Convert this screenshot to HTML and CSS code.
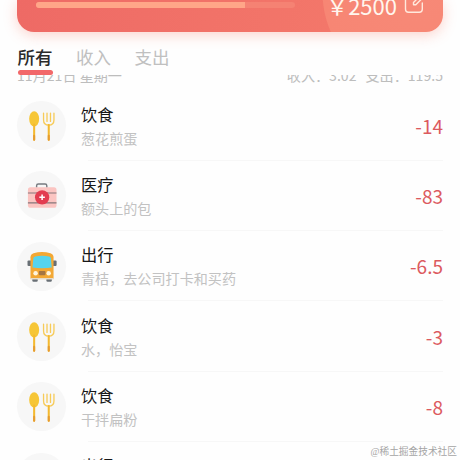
FILE: index.html
```html
<!DOCTYPE html>
<html lang="zh-CN">
<head>
<meta charset="utf-8">
<title>账单</title>
<link rel="stylesheet" href="styles.css">
</head>
<body>
<svg class="defs" aria-hidden="true">
  <symbol id="food" viewBox="0 0 48 48">
    <ellipse cx="16.8" cy="17.5" rx="4.9" ry="7.4" fill="#f6c636"/>
    <path d="M16.8 23v15" stroke="#f4b92f" stroke-width="2" stroke-linecap="round"/>
    <path d="M26 12v6.500c0 3 2 5 5.100 5s5.100-2 5.100-5v-6.500M29.400 12v8M32.800 12v8" fill="none" stroke="#f7cb58" stroke-width="1.300" stroke-linecap="round"/>
    <path d="M31.100 23.500v14.500" stroke="#f4b92f" stroke-width="2" stroke-linecap="round"/>
    <path d="M16.800 34v4M31.100 34v4" stroke="#e69b2f" stroke-width="2" stroke-linecap="round"/>
  </symbol>
  <symbol id="medical" viewBox="0 0 48 48">
    <path d="M19.200 16.500v-2q0-1.700 1.700-1.700h6.600q1.700 0 1.700 1.700v2" fill="none" stroke="#777b80" stroke-width="1.400"/>
    <rect x="10.700" y="16" width="28" height="20" rx="2.500" fill="#fbc5c2"/>
    <path d="M10.700 21.600h28M10.700 31.200h28" stroke="#87777b" stroke-width="1.100"/>
    <circle cx="24.600" cy="25.800" r="7" fill="#e33c50"/>
    <path d="M24.600 23.100v5.400M21.900 25.800h5.400" stroke="#fff" stroke-width="1.500"/>
  </symbol>
  <symbol id="bus" viewBox="0 0 48 48">
    <rect x="10.300" y="18" width="4" height="5.500" rx="1" fill="#686f75"/>
    <rect x="34.800" y="18" width="4" height="5.500" rx="1" fill="#686f75"/>
    <rect x="15" y="34" width="5.300" height="5" rx="1.200" fill="#686f75"/>
    <rect x="28.800" y="34" width="5.300" height="5" rx="1.200" fill="#686f75"/>
    <path d="M13.200 36V15q0-3 3-4 8.300-2.400 16.600 0 3 1 3 4v21z" fill="#f3a834"/>
    <path d="M16 16q0-1.600 1.700-1.900 6.900-1.200 13.800 0 1.700.3 1.700 1.900l.8 9q-9.400 1.500-18.800 0z" fill="#56d4ee"/>
    <circle cx="18.200" cy="30.500" r="2.200" fill="#fff5dd"/>
    <circle cx="31" cy="30.500" r="2.200" fill="#fff5dd"/>
    <rect x="21.400" y="28.500" width="6.500" height="4" rx=".8" fill="#a47542"/>
    <path d="M13.200 36h22.600" stroke="#e8dcc8" stroke-width="1.400"/>
  </symbol>
</svg>
<main class="screen">
  <section class="budget">
    <div class="progress"><div class="progress-fill"></div></div>
    <div class="budget-total"><span>￥</span><span>2500</span>
      <svg class="edit" viewBox="0 0 20 20"><path d="M10.500 1.500H4.500Q1.500 1.500 1.500 4.500v10.800q0 3 3 3h10.800q3 0 3-3V9M9.500 8.500v2.300h2.300L19 3.500M9.500 8.500 16.500 1.500" fill="none" stroke="#ffe9dd" stroke-width="1.400" stroke-linecap="round" stroke-linejoin="round"/></svg>
    </div>
  </section>
  <nav class="tabs">
    <span class="tab active">所有</span><span class="tab">收入</span><span class="tab">支出</span>
  </nav>
  <section class="list">
    <header class="day"><span>11月21日 星期一</span><span class="sums"><span>收入：3.02</span><span>支出：119.5</span></span></header>
    <article class="row"><svg class="icon"><use href="#food"/></svg><div class="info"><h3>饮食</h3><p>葱花煎蛋</p></div><b class="amount">-14</b></article>
    <article class="row"><svg class="icon"><use href="#medical"/></svg><div class="info"><h3>医疗</h3><p>额头上的包</p></div><b class="amount">-83</b></article>
    <article class="row"><svg class="icon"><use href="#bus"/></svg><div class="info"><h3>出行</h3><p>青桔，去公司打卡和买药</p></div><b class="amount">-6.5</b></article>
    <article class="row"><svg class="icon"><use href="#food"/></svg><div class="info"><h3>饮食</h3><p>水，怡宝</p></div><b class="amount">-3</b></article>
    <article class="row"><svg class="icon"><use href="#food"/></svg><div class="info"><h3>饮食</h3><p>干拌扁粉</p></div><b class="amount">-8</b></article>
    <article class="row"><svg class="icon"></svg><div class="info"><h3>出行</h3></div></article>
  </section>
  <div class="watermark">@稀土掘金技术社区</div>
</main>
</body>
</html>
```
FILE: styles.css
```css
* { box-sizing: border-box; }
body {
  margin: 0;
  background: #fefefe;
  font-family: "Noto Sans CJK SC", sans-serif;
}
.defs { display: none; }
.screen {
  position: relative;
  display: flex;
  flex-direction: column;
  width: 460px;
  height: 460px;
  overflow: hidden;
}
.budget {
  flex: none;
  display: flex;
  justify-content: space-between;
  height: 32px;
  margin: 0 17px;
  padding: 0 19px;
  border-radius: 0 0 17px 17px;
  background:
    radial-gradient(circle at 405px -8px, #f78977 0, #f78674 99px, transparent 100px),
    linear-gradient(100deg, #ee6a65, #f3776a 75%);
  box-shadow: 0 3px 14px rgba(250, 120, 100, .32);
}
.progress {
  width: 259px;
  height: 6px;
  margin-top: 2px;
  border-radius: 3px;
  background: #f58273;
}
.progress-fill {
  width: 209px;
  height: 6px;
  border-radius: 3px 0 0 3px;
  background: #ffa688;
}
.budget-total {
  display: flex;
  height: 32px;
  margin-top: -11px;
  font-size: 22px;
  line-height: 32px;
  color: #fff6ee;
}
.edit {
  width: 20px;
  height: 20px;
  margin: 5px 0 0 7px;
}
.tabs {
  flex: none;
  display: flex;
  gap: 23.5px;
  height: 43px;
  padding: 12px 17.5px 0;
}
.tab {
  height: 31px;
  font-size: 17.5px;
  line-height: 26px;
  color: #c0c0c0;
}
.active {
  font-weight: 500;
  color: #2b2b2b;
}
.active::after {
  content: "";
  position: relative;
  z-index: 1;
  display: block;
  height: 5px;
  margin-top: -.5px;
  border-radius: 3px;
  background: #f2686a;
}
.list {
  flex: none;
  height: 385px;
  overflow: hidden;
  padding: 0 17px;
}
.day {
  display: flex;
  justify-content: space-between;
  height: 26px;
  margin-top: -10.5px;
  font-size: 14.1px;
  line-height: 20px;
  color: #bdbdbd;
}
.sums { display: flex; gap: 9px; }
.row {
  position: relative;
  display: flex;
  align-items: center;
  height: 70.3px;
}
.row:not(:last-child)::after {
  content: "";
  position: absolute;
  right: 0;
  bottom: 0;
  left: 71px;
  height: 1px;
  background: #f7f7f7;
}
.icon {
  width: 49px;
  height: 49px;
  margin-right: 15px;
  border-radius: 50%;
  background: #f7f7f7;
}
.info { flex: 1; height: 50px; }
.info h3 {
  margin: 0;
  font-size: 16.2px;
  font-weight: 400;
  line-height: 26px;
  color: #171717;
}
.info p {
  margin: 0;
  font-size: 14.1px;
  line-height: 22px;
  color: #c2c2c2;
}
.amount {
  padding-bottom: 1px;
  font-size: 19px;
  font-weight: 400;
  color: #dc5a5e;
}
.watermark {
  position: absolute;
  right: 3px;
  bottom: 1px;
  font-family: "Liberation Serif", "Noto Sans CJK SC", serif;
  font-size: 9.7px;
  line-height: 14px;
  color: #a5a5a5;
}
```
